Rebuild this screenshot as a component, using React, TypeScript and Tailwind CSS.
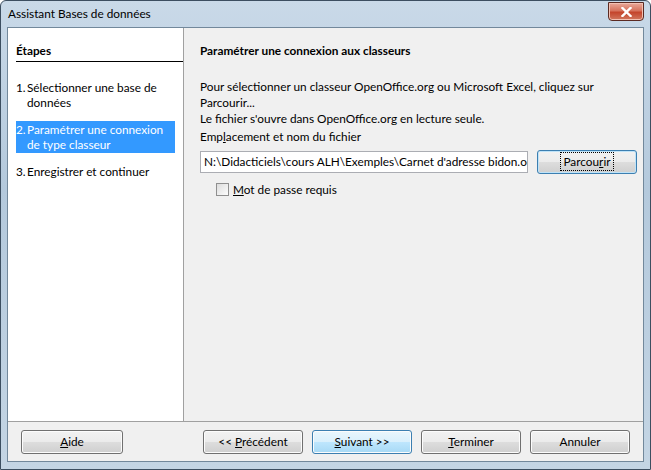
import React from 'react';

const font = { fontFamily: '"Segoe UI", Lato, "Noto Sans", sans-serif' };

const DlgButton: React.FC<{ label: React.ReactNode; variant?: 'default' | 'primary' | 'focus'; className?: string }> = ({
  label,
  variant = 'default',
  className,
}) => {
  const look =
    variant === 'primary'
      ? 'border-[#3c7fb1] bg-[linear-gradient(#eaf6fd_0%,#d9f0fc_50%,#bee6fd_51%,#a7d9f5_100%)] shadow-[inset_0_0_0_1px_#fcfcfc]'
      : variant === 'focus'
        ? 'border-[#3c7fb1] bg-[linear-gradient(#f2f2f2_0%,#ebebeb_50%,#dddddd_51%,#cfcfcf_100%)] shadow-[inset_0_0_0_1px_#bfe3f8]'
        : 'border-[#707070] bg-[linear-gradient(#f2f2f2_0%,#ebebeb_50%,#dddddd_51%,#cfcfcf_100%)] shadow-[inset_0_0_0_1px_#fcfcfc]';
  return (
    <div className={`flex h-[24px] items-center justify-center rounded-[3px] border text-black ${look} ${className ?? ''}`}>
      <span className="whitespace-pre">{label}</span>
    </div>
  );
};

export default function App() {
  return (
    <div
      className="relative flex h-[470px] w-[651px] flex-col overflow-hidden rounded-t-[6px] border border-[#3c4e60] bg-[linear-gradient(180deg,#c9d9e8_0%,#b4c9dc_40%,#c4d5e4_100%)] text-[11.8px]"
      style={font}
    >
      {/* title bar */}
      <div className="flex h-[26px] shrink-0 items-center justify-between pl-[7px] pr-[6px]">
        <span className="text-black">Assistant Bases de données</span>
        <div className="mb-[5px] flex h-[19px] w-[36px] items-center justify-center rounded-b-[4px] border border-[#5b2a22] bg-[linear-gradient(#e9a99a_0%,#d6735d_45%,#c4452c_55%,#d1775e_100%)] shadow-[inset_0_0_0_1px_#f2c0b2]">
          <svg width="11" height="10" viewBox="0 0 11 10">
            <path d="M1.5 1 L9.5 9 M9.5 1 L1.5 9" stroke="#ffffff" strokeWidth="2.4" strokeLinecap="square" />
          </svg>
        </div>
      </div>

      {/* client area */}
      <div className="mx-[6px] mb-[7px] flex flex-1 flex-col border border-[#72889b] bg-[#f0f0f0]">
        <div className="flex flex-1">
          {/* steps panel */}
          <div className="w-[176px] shrink-0 border-r border-[#a0a0a0] bg-white pl-[8px] pt-[14px] text-black">
            <div className="border-b border-black pb-[1px] font-bold leading-[18px]">Étapes</div>
            <div className="mt-[18px] flex flex-col gap-[11px] pr-[8px] leading-[15px]">
              <div className="flex">
                <span className="w-[11px] shrink-0">1.</span>
                <span>Sélectionner une base de données</span>
              </div>
              <div className="flex bg-[#3399ff] py-[1px] text-white">
                <span className="w-[11px] shrink-0">2.</span>
                <span>Paramétrer une connexion de type classeur</span>
              </div>
              <div className="flex">
                <span className="w-[11px] shrink-0">3.</span>
                <span>Enregistrer et continuer</span>
              </div>
            </div>
          </div>

          {/* page */}
          <div className="flex-1 pl-[16px] pr-[7px] pt-[14px] text-black">
            <div className="font-bold leading-[18px]">Paramétrer une connexion aux classeurs</div>
            <div className="mt-[19px] leading-[16px]">
              <p>Pour sélectionner un classeur OpenOffice.org ou Microsoft Excel, cliquez sur Parcourir...</p>
              <p>Le fichier s'ouvre dans OpenOffice.org en lecture seule.</p>
            </div>
            <div className="mt-[2px] leading-[16px]">
              Emp<span className="underline">l</span>acement et nom du fichier
            </div>
            <div className="mt-[5px] flex items-center gap-[9px]">
              <div className="flex h-[22px] w-[328px] items-center overflow-hidden whitespace-nowrap border border-[#abadb3] bg-white pl-[3px]">
                N:\Didacticiels\cours ALH\Exemples\Carnet d'adresse bidon.ods
              </div>
              <DlgButton
                variant="focus"
                className="w-[100px]"
                label={
                  <span className="border border-dotted border-black px-[2px] py-[1px] leading-[14px]">
                    Parcou<span className="underline">r</span>ir
                  </span>
                }
              />
            </div>
            <label className="ml-[16px] mt-[7px] flex items-center gap-[4px]">
              <span className="h-[13px] w-[13px] border border-[#8f8f8f] bg-[linear-gradient(135deg,#dcdcdc,#fdfdfd)]" />
              <span>
                <span className="underline">M</span>ot de passe requis
              </span>
            </label>
          </div>
        </div>

        {/* button bar */}
        <div className="flex h-[40px] shrink-0 items-center border-t border-[#a0a0a0] bg-[#f0f0f0] px-[13px] pt-[1px]">
          <DlgButton className="w-[102px]" label={<><span className="underline">A</span>ide</>} />
          <div className="ml-auto flex gap-[9px]">
            <DlgButton className="w-[100px]" label={<>{'<< '}<span className="underline">P</span>récédent</>} />
            <DlgButton variant="primary" className="w-[100px]" label={<><span className="underline">S</span>{'uivant >>'}</>} />
            <DlgButton className="w-[100px]" label={<><span className="underline">T</span>erminer</>} />
            <DlgButton className="w-[100px]" label="Annuler" />
          </div>
        </div>
      </div>
    </div>
  );
}
